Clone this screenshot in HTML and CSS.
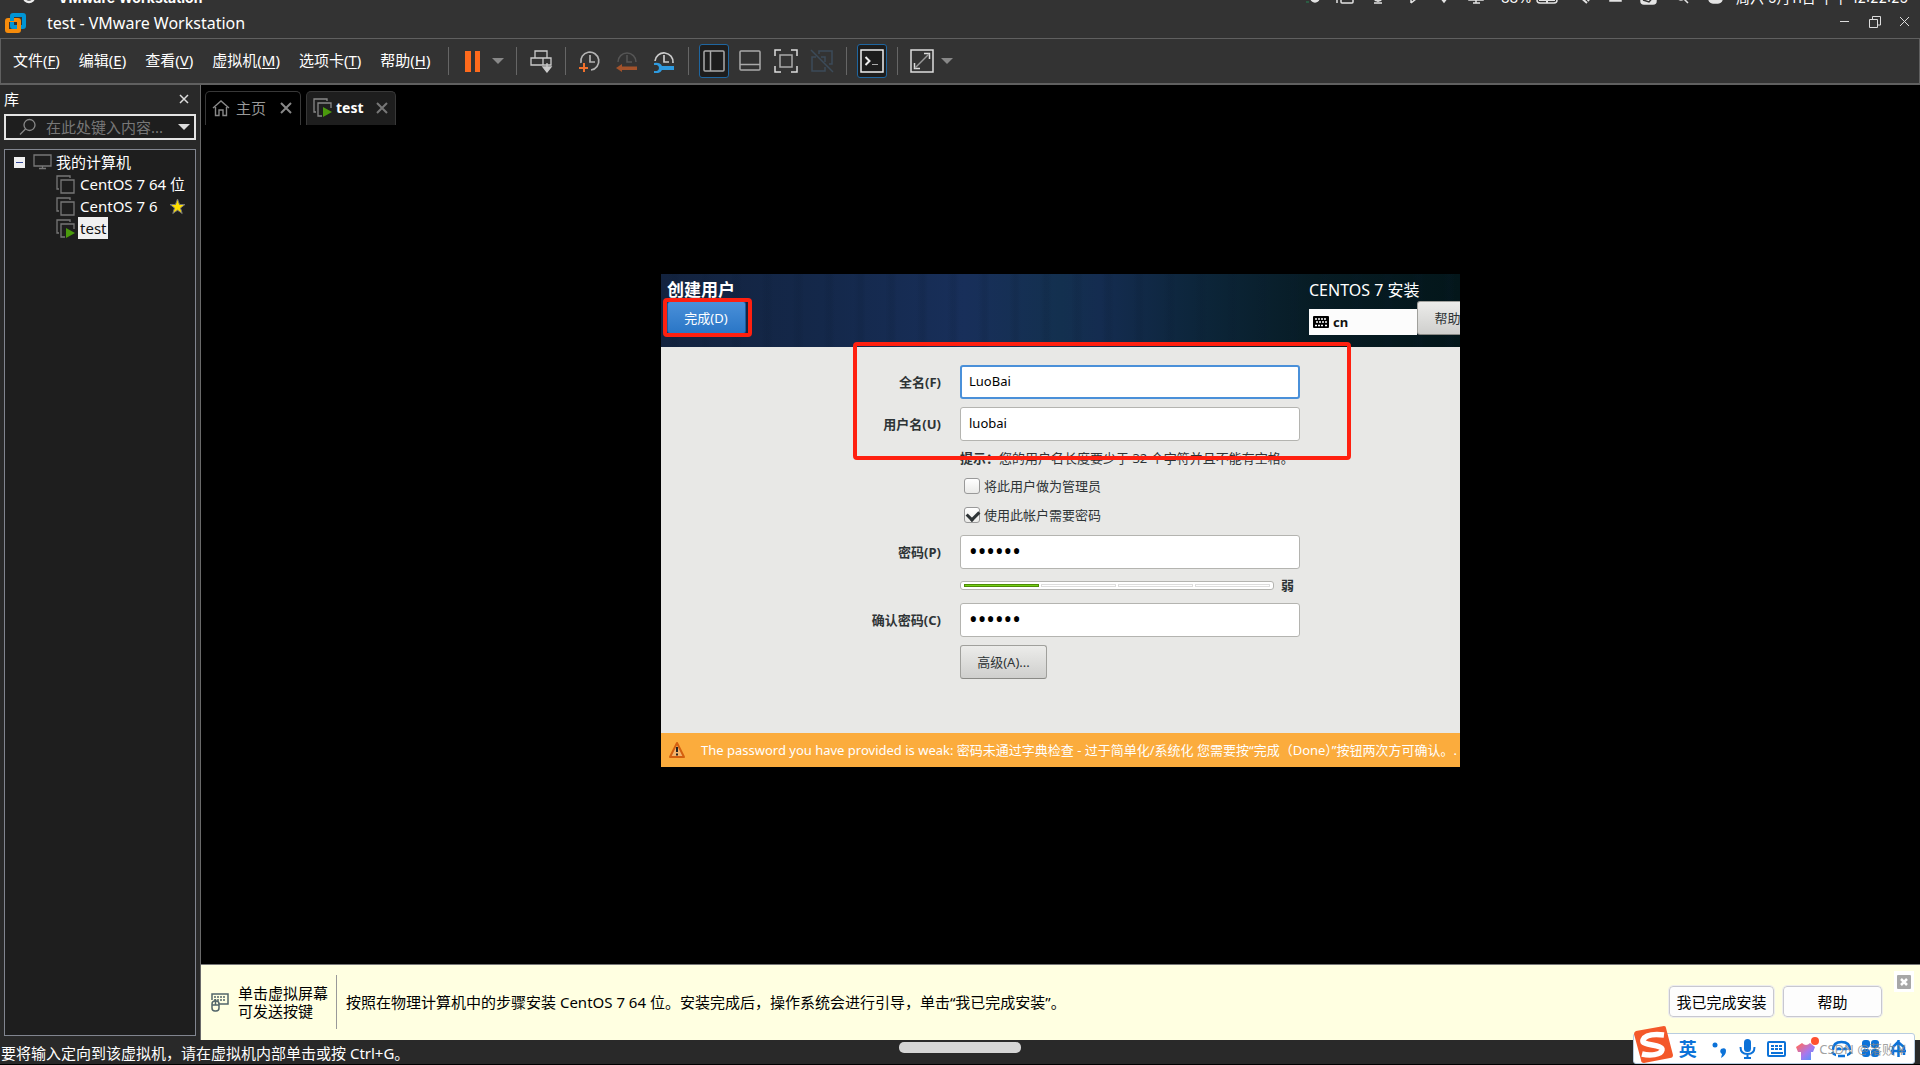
FILE: index.html
```html
<!DOCTYPE html>
<html lang="zh-CN">
<head>
<meta charset="utf-8">
<title>test - VMware Workstation</title>
<link rel="stylesheet" href="styles.css">
</head>
<body>
<div class="host-bar">
  <span class="host-icon"><svg width="14" height="14" viewBox="0 0 14 14"><circle cx="7" cy="6" r="5" fill="none" stroke="#eee" stroke-width="2.5"/></svg></span>
  <b class="host-app">VMware Workstation</b>
  <span class="host-tray">
    <svg width="191" height="14" viewBox="0 0 191 14"><g fill="#e4e4e4" stroke="#e4e4e4" stroke-width="1.5"><circle cx="9" cy="7" r="4"/><path d="M0 11h3" stroke="#2a6b4a"/><path d="M31 4v8M35 4h12v7q0 1-1 1H36q-1 0-1-1z" fill="none"/><path d="M72 8v3M68 12h8M68 6q0 4 4 4t4-4" fill="none"/><path d="M105 12V5l5 3-5 4" fill="none"/><path d="M134 6l4 5 4-5z"/><path d="M163 4h14v5h-14zM167 12h7M170 9v3"/></g></svg>
    <span>88%</span>
    <svg width="190" height="14" viewBox="0 0 190 14"><g fill="none" stroke="#e4e4e4" stroke-width="1.5"><rect x="1" y="3" width="20" height="9" rx="3"/><path d="M3 9h7M12 9h7M11 4v8" stroke-width="2"/><path d="M43 5l8 7M48 4l5 6" stroke-width="2"/><path d="M74 4h11v6H74z" fill="#e4e4e4"/><rect x="105" y="2" width="15" height="11" rx="3" fill="#e4e4e4"/><path d="M107 9l6 2 5-6" stroke="#333"/><circle cx="145" cy="5" r="4"/><path d="M148 8l4 4"/><rect x="173" y="3" width="13" height="9" rx="4" fill="#e4e4e4"/><path d="M176 8h3" stroke="#333"/></g></svg>
    <span class="clock">周六 5月11日 下午 12:22:25</span>
  </span>
</div>
<header class="titlebar">
  <svg width="22" height="22" viewBox="0 0 22 22" fill="none" stroke-width="4"><rect x="7" y="3" width="12" height="12" rx="1" stroke="#0095d5"/><rect x="2" y="8" width="12" height="11" rx="1" stroke="#f68b0b"/><path d="M7 9V5" stroke="#0095d5"/></svg>
  <h1>test - VMware Workstation</h1>
  <div class="window-buttons">
    <button aria-label="最小化"><svg width="12" height="12" viewBox="0 0 12 12"><path d="M1 5.5h9"/></svg></button>
    <button aria-label="还原"><svg width="12" height="12" viewBox="0 0 12 12"><path d="M.5 3.500h8v8h-8zM3.500 3V.5h8v8.500H9"/></svg></button>
    <button aria-label="关闭"><svg width="12" height="12" viewBox="0 0 12 12"><path d="M1 1l9 9M10 1l-9 9"/></svg></button>
  </div>
</header>
<div class="toolbar">
  <nav class="menus">
    <button>文件(<u>F</u>)</button><button>编辑(<u>E</u>)</button><button>查看(<u>V</u>)</button><button>虚拟机(<u>M</u>)</button><button>选项卡(<u>T</u>)</button><button>帮助(<u>H</u>)</button>
  </nav>
  <div class="group">
    <button class="tool" aria-label="挂起"><svg width="24" height="24" viewBox="0 0 24 24" fill="#ff6a1c"><path d="M4 2h6v21H4zM14 2h5v21h-5z"/></svg></button>
    <button class="caret" aria-label="电源选项"></button>
  </div>
  <div class="group">
    <button class="tool" aria-label="发送按键"><svg width="24" height="24" viewBox="0 0 24 24" fill="none" stroke="#ccc" stroke-width="1.300"><path d="M6 9V2h12v7M2 9h20v7H2zM14 9v7"/><path d="M18 14v4M18 23l-4-5h8z" fill="#ccc"/></svg></button>
  </div>
  <div class="group wide">
    <button class="tool" aria-label="拍摄快照"><svg width="24" height="24" viewBox="0 0 24 24" fill="none" stroke="#b4b4b4" stroke-width="1.700"><path d="M3 14A9 9 0 1 1 13 21M12 6v7h5"/><path d="M6 14v9M1 19h9" stroke="#f0702c" stroke-width="2"/></svg></button>
    <button class="tool" aria-label="恢复快照"><svg width="24" height="24" viewBox="0 0 24 24" fill="none" stroke="#555" stroke-width="1.500"><path d="M3 13A9 9 0 1 1 21 13M12 6v7h5"/><path d="M1 19l6-4v2.500h15v3.500H7V23z" fill="#a2522b" stroke="none"/></svg></button>
    <button class="tool" aria-label="管理快照"><svg width="24" height="24" viewBox="0 0 24 24" fill="none" stroke="#ccc" stroke-width="1.700"><path d="M3 12A9 9 0 1 1 21 14M12 6v7h5"/><path d="M2 14q6-1 8 3h12v4H10q-2 4-8 3v-2h3q2-1 2-3t-2-3H2z" fill="#2e9be0" stroke="none"/></svg></button>
  </div>
  <div class="group views">
    <button class="tool on" aria-label="显示库"><svg width="24" height="24" viewBox="0 0 24 24" fill="none" stroke="#aaa" stroke-width="1.500"><rect x="2" y="2" width="20" height="20" rx="1"/><path d="M8.500 2v20"/></svg></button>
    <button class="tool" aria-label="缩略图栏"><svg width="24" height="24" viewBox="0 0 24 24" fill="none" stroke="#aaa" stroke-width="1.500"><rect x="2" y="2" width="20" height="19" rx="1"/><path d="M2 15.500h20"/></svg></button>
    <button class="tool" aria-label="全屏"><svg width="24" height="24" viewBox="0 0 24 24" fill="none" stroke="#ddd" stroke-width="1.500"><path d="M1 7V1h6M17 1h6v6M23 17v6h-6M7 23H1v-6"/><rect x="6" y="6" width="12" height="12" stroke="#aaa"/></svg></button>
    <button class="tool" aria-label="Unity"><svg width="24" height="24" viewBox="0 0 24 24" fill="none" stroke="#3c4b59" stroke-width="1.500"><path d="M1 1l22 22M9 5V2h13v13h-3M6 8H2v14h13v-4M11 8h4v5"/></svg></button>
  </div>
  <div class="group">
    <button class="tool on" aria-label="控制台视图"><svg width="24" height="24" viewBox="0 0 24 24" fill="none" stroke="#eee"><path d="M1 1h22v22H1z" stroke-width="1.500"/><path d="M5.500 8l4 4-4 4" stroke-width="2"/><path d="M12 15.500h6" stroke="#aaa"/></svg></button>
  </div>
  <div class="group">
    <button class="tool" aria-label="拉伸客户机"><svg width="24" height="24" viewBox="0 0 24 24" fill="none" stroke="#ddd" stroke-width="1.500"><path d="M1 1h22v22H1zM14 4.500h5.500V10M4.500 14v5.500H10"/><path d="M19 5L5 19" stroke="#999"/></svg></button>
    <button class="caret" aria-label="拉伸选项"></button>
  </div>
</div>
<div class="workspace">
  <aside class="library">
    <div class="library-head"><h2>库</h2><button aria-label="关闭库"><svg width="10" height="10" viewBox="0 0 10 10"><path d="M1 1l8 8M9 1L1 9" stroke="#ddd" stroke-width="1.500"/></svg></button></div>
    <label class="search">
      <svg width="18" height="18" viewBox="0 0 18 18" fill="none" stroke="#888" stroke-width="1.300"><circle cx="10.500" cy="7" r="5.500"/><path d="M6.500 11L1 16.500"/></svg>
      <input type="text" placeholder="在此处键入内容..." aria-label="搜索">
      <i class="arrow"></i>
    </label>
    <ul class="tree">
      <li><i class="collapse"></i><svg width="20" height="16" viewBox="0 0 20 16" fill="none" stroke="#777" stroke-width="1.300"><path d="M1 1h17v11H1zM9.500 12v2M6 14.500h7"/></svg><span>我的计算机</span></li>
      <li class="vm"><svg width="19" height="19" viewBox="0 0 19 19" fill="none" stroke="#777" stroke-width="1.300"><path d="M5 5h13v13H5zM3 14H1V1h13v2"/></svg><span>CentOS 7 64 位</span></li>
      <li class="vm"><svg width="19" height="19" viewBox="0 0 19 19" fill="none" stroke="#777" stroke-width="1.300"><path d="M5 5h13v13H5zM3 14H1V1h13v2"/></svg><span>CentOS 7 6</span><svg class="star" width="17" height="17" viewBox="0 0 17 17"><path d="M8.500 1l2 5.500h5.500l-4.500 3.500 1.700 5.500-4.700-3.300-4.700 3.300L5.500 10 1 6.500h5.500z" fill="#ffdf00" stroke="#777"/></svg></li>
      <li class="vm"><svg width="19" height="19" viewBox="0 0 19 19" fill="none" stroke="#777" stroke-width="1.300"><path d="M9 18H5V5h13v5M3 14H1V1h13v2"/><path d="M10 9l9 5-9 5z" fill="#4a9a0c" stroke="none"/></svg><span class="selected">test</span></li>
    </ul>
  </aside>
  <main>
    <div class="tabs">
      <div class="tab"><svg width="18" height="18" viewBox="0 0 18 18" fill="none" stroke="#888" stroke-width="1.400"><path d="M1 9l8-7 8 7M3.500 8v8.500H7V11h4v5.500h3.500V8"/></svg><span>主页</span><button aria-label="关闭主页"><svg width="12" height="12" viewBox="0 0 12 12"><path d="M1 1l10 10M11 1L1 11" stroke="#888" stroke-width="2"/></svg></button></div>
      <div class="tab active"><svg width="19" height="19" viewBox="0 0 19 19" fill="none" stroke="#888" stroke-width="1.300"><path d="M9 18H5V5h13v5M3 14H1V1h13v2"/><path d="M10 9l9 5-9 5z" fill="#4a9a0c" stroke="none"/></svg><b>test</b><button aria-label="关闭 test"><svg width="12" height="12" viewBox="0 0 12 12"><path d="M1 1l10 10M11 1L1 11" stroke="#777" stroke-width="2"/></svg></button></div>
    </div>
    <div class="console">
      <section class="guest">
        <header class="guest-head">
          <div class="guest-left"><h3>创建用户</h3><button class="done">完成(D)</button></div>
          <div class="guest-right"><p>CENTOS 7 安装</p>
            <div class="guest-tools"><span class="layout"><svg width="16" height="12" viewBox="0 0 16 12"><rect width="16" height="12" rx="1"/><path d="M2 3h12M3 6h11M2 9.500h2M5 9.500h6M12 9.500h2" stroke="#fff" stroke-width="1.500" stroke-dasharray="2 1"/></svg>cn</span><button class="plain help">帮助</button></div>
          </div>
        </header>
        <form class="user-form">
          <label for="full">全名(F)</label><input class="focused" id="full" type="text" value="LuoBai" autofocus>
          <label for="name">用户名(U)</label><input id="name" type="text" value="luobai">
          <p class="hint"><b>提示：</b>您的用户名长度要少于 32 个字符并且不能有空格。</p>
          <label class="check"><input type="checkbox">将此用户做为管理员</label>
          <label class="check second"><input type="checkbox" checked>使用此帐户需要密码</label>
          <label for="pw">密码(P)</label><input id="pw" type="password" value="123456">
          <div class="strength"><div class="meter" role="meter" aria-valuenow="1" aria-valuemin="0" aria-valuemax="4" aria-label="密码强度"><i class="full"></i><i></i><i></i><i></i></div><b>弱</b></div>
          <label for="pw2">确认密码(C)</label><input id="pw2" type="password" value="123456">
          <button type="button" class="plain advanced">高级(A)...</button>
        </form>
        <footer class="warning"><svg width="18" height="18" viewBox="0 0 18 18"><path d="M9 2l7 14H2z" fill="#f3b36b" stroke="#d4600f" stroke-width="2" stroke-linejoin="round"/><path d="M9 6v5M9 12.500v2" stroke="#222" stroke-width="2"/></svg><span>The password you have provided is weak: 密码未通过字典检查 - 过于简单化/系统化 您需要按“完成（Done）”按钮两次方可确认。.</span></footer>
        <div class="mark mark-done"></div>
        <div class="mark mark-names"></div>
      </section>
    </div>
    <div class="notice">
      <svg width="20" height="20" viewBox="0 0 20 20" fill="none" stroke="#526569" stroke-width="1.500"><path d="M2 8V2h16v10H9"/><path d="M4 5h12M4 8h12" stroke-dasharray="2 1"/><rect x="2" y="9" width="7" height="10" rx="3" fill="#ffffe1"/><path d="M5.500 7v6M2 13h7"/></svg>
      <p class="grab">单击虚拟屏幕<br>可发送按键</p>
      <p class="steps">按照在物理计算机中的步骤安装 CentOS 7 64 位。安装完成后，操作系统会进行引导，单击“我已完成安装”。</p>
      <button class="finish">我已完成安装</button><button class="assist">帮助</button>
      <button class="dismiss" aria-label="关闭提示"><svg width="14" height="14" viewBox="0 0 14 14"><rect width="14" height="14" rx="1" fill="#a7a7a7"/><path d="M4 4l6 6M10 4l-6 6" stroke="#fff" stroke-width="2.500"/></svg></button>
    </div>
  </main>
</div>
<footer class="status">要将输入定向到该虚拟机，请在虚拟机内部单击或按 Ctrl+G。</footer>
<div class="home-indicator"></div>
<div class="ime">
  <svg class="sogou" width="40" height="37" viewBox="0 0 40 37"><path d="M2 5L30 0q2 0 2 2l7 27q0 3-3 3L10 37q-3 0-3-3L0 8q0-2 2-3z" fill="#f4582a"/><path d="M30 9Q12 7 9 14c-2 6 20 4 19 10-1 5-12 6-20 4" fill="none" stroke="#fff" stroke-width="5.500"/></svg>
  <b>英</b>
  <svg width="17" height="18" viewBox="0 0 17 18" fill="#0c72d8"><circle cx="4" cy="5" r="2.500"/><path d="M10 9q5-2 5 2t-5 7l1-4q-3-2-1-5z"/></svg>
  <svg width="17" height="20" viewBox="0 0 17 20"><rect x="5" y="0" width="7" height="13" rx="3.500" fill="#0c72d8"/><path d="M1.500 8q0 7 7 7t7-7M8.500 15v4M5 19h7" fill="none" stroke="#0c72d8" stroke-width="2"/></svg>
  <svg width="19" height="16" viewBox="0 0 19 16" fill="none" stroke="#0c72d8" stroke-width="2"><rect x="1" y="1" width="17" height="14" rx="1"/><path d="M4 5h12M4 8h12" stroke-dasharray="3 1"/><path d="M4 12h12"/></svg>
  <svg width="24" height="24" viewBox="0 0 24 24"><defs><linearGradient id="shirt" x1="0" y1="0" x2="1" y2="1"><stop offset=".1" stop-color="#ff6a64"/><stop offset=".55" stop-color="#a878ee"/><stop offset="1" stop-color="#3e9cff"/></linearGradient></defs><path d="M6 6q4 4 8 0l5 4-2 5h-2v8H5v-8H2L0 10z" fill="url(#shirt)"/><circle cx="19" cy="4" r="4" fill="#ff512f"/></svg>
  <svg width="21" height="18" viewBox="0 0 21 18" fill="none" stroke="#0c72d8" stroke-width="2.500"><path d="M2 10Q2 2 10.500 2T19 10M1 12q2 3 4 3M20 12q-2 3-4 3M7 16h7M6 10q2-3 4 0M12 10q2-3 4 0"/></svg>
  <svg width="17" height="17" viewBox="0 0 17 17" fill="#0c72d8"><rect width="8" height="8" rx="3"/><rect x="9" width="8" height="8" rx="3"/><rect y="9" width="8" height="8" rx="3"/><rect x="9" y="9" width="8" height="8" rx="3"/></svg>
  <svg width="17" height="19" viewBox="0 0 17 19" fill="none" stroke="#0c72d8" stroke-width="2.500"><path d="M8.500 1v17M3 16V8l5-5 6 5v8M1 12h15"/></svg>
  <span class="watermark">CSDN @落败￥</span>
</div>
</body>
</html>
```
FILE: styles.css
```css
* { box-sizing: border-box; }
body {
  margin: 0;
  height: 100vh;
  display: flex;
  flex-direction: column;
  overflow: hidden;
  background: #333;
  color: #fff;
  font: 15px/20px "Noto Sans", "Noto Sans CJK SC", sans-serif;
}
h1, h2, h3, p, ul { margin: 0; padding: 0; font-size: inherit; font-weight: normal; }
button, input { font: inherit; color: inherit; }
button { display: flex; align-items: center; justify-content: center; padding: 0; border: 0; background: none; white-space: nowrap; }
svg { flex: none; display: block; }

.host-bar { flex: none; height: 5px; display: flex; align-items: flex-end; overflow: hidden; padding: 0 18px 0 22px; font: 14px/14px Inter, "Noto Sans CJK SC", sans-serif; white-space: nowrap; }
.host-app { margin-left: 22px; }
.host-tray { display: flex; align-items: flex-end; margin-left: auto; gap: 4px; }
.clock { width: 166px; margin-left: 6px; }

.titlebar { flex: none; height: 33px; display: flex; align-items: center; padding: 3px 9px 0 5px; }
.titlebar h1 { margin-left: 20px; font-size: 16px; }
.window-buttons { display: flex; gap: 18px; margin-left: auto; padding-bottom: 2px; }
.window-buttons svg { fill: none; stroke: #ddd; }

.toolbar { flex: none; height: 47px; display: flex; align-items: center; padding: 0 0 1px 12px; border: 1px solid #606060; border-bottom-width: 2px; }
.menus { display: flex; gap: 19px; padding: 0 18px 1px 0; }
.menus u { text-underline-offset: 2px; }
.group { display: flex; align-items: center; height: 28px; padding: 0 12px; border-left: 1px solid #666; }
.group.wide { gap: 13px; }
.group.views { gap: 6px; padding: 0 9px 0 10px; }
.tool { width: 24px; height: 34px; }
.tool svg { width: 24px; height: 24px; }
.views .tool, .tool.on { width: 30px; }
.tool.on { border: 1px solid #1f66a0; border-radius: 3px; background: #1d1d1d; }
.group:has(> .tool.on:only-child) { padding: 0 10px; }
.caret { margin-left: 7px; border: 6px solid transparent; border-top-color: #888; border-bottom: 0; }

.workspace { flex: 1; min-height: 0; display: flex; }
.library { flex: none; width: 200px; display: flex; flex-direction: column; padding: 4px 4px; background: #292929; }
.library-head { display: flex; justify-content: space-between; align-items: center; height: 20px; padding-right: 7px; margin-bottom: 5px; }
.search { display: flex; align-items: center; height: 26px; padding: 0 4px 0 13px; border: 2px solid #e4e4e4; background: #1e1e1e; }
.search input { min-width: 0; flex: 1; margin-left: 9px; padding: 0; border: 0; background: none; outline: 0; }
.search input::placeholder { color: #777; }
.arrow { border: 6px solid transparent; border-top-color: #ddd; border-bottom: 0; }
.tree { flex: 1; margin-top: 9px; padding-top: 1px; border: 1px solid #81858f; background: #1e1e1e; list-style: none; overflow: hidden; }
.tree li { display: flex; align-items: center; height: 22px; padding-left: 9px; white-space: nowrap; }
.tree li svg { margin-left: 8px; }
.tree li span { margin-left: 3px; padding: 0 2px; }
.tree li:first-child span { margin-left: 1px; }
.tree .vm { padding-left: 43px; }
.tree .selected { height: 22px; line-height: 22px; background: #f0f0f0; color: #111; }
.tree li .star { margin-left: 9px; }
.collapse { display: flex; align-items: center; width: 11px; height: 11px; background: #f0f0f0; }
.collapse::before { content: ""; flex: 1; height: 1px; margin: 0 2px; background: #34489a; }

main { flex: 1; min-width: 0; display: flex; flex-direction: column; border-left: 1px solid #6a6a6a; background: #000; }
.tabs { display: flex; gap: 5px; padding: 6px 4px 0; }
.tab { display: flex; align-items: center; height: 34px; padding: 0 8px 2px 6px; border: 1px solid #383838; border-bottom: 0; border-radius: 5px 5px 0 0; color: #999; }
.tab span { margin: 0 14px 0 6px; }
.tab b { margin: 0 12px 0 4px; font-size: 14px; color: #fff; }
.tab.active { padding-right: 7px; background: #1e1e1e; }
.console { flex: 1; min-height: 0; display: flex; align-items: center; justify-content: center; padding-bottom: 48px; }

.guest { position: relative; width: 799px; background: #e8e8e6; color: #2e3436; font-size: 13px; }
.guest-head { display: flex; justify-content: space-between; height: 73px; padding: 6px 0 0 6px; overflow: hidden; color: #fff;
  background: repeating-linear-gradient(90deg, #0000 0 7px, #0a1a3022 12px 15px, #0000 19px 31px), linear-gradient(90deg, #13233f 0, #14284a 20%, #182f5a 38%, #13304f 50%, #142c50 55%, #0c2539 68%, #071c24 82%, #03161a 100%); }
.guest-left h3 { font-size: 17px; line-height: 20px; font-weight: bold; margin-bottom: 1px; }
.done { width: 79px; height: 33px; padding-right: 1px; border: 1px solid #1c5c9f; border-radius: 3px; background: linear-gradient(#4a90d9, #2a76c6); }
.guest-right { width: 151px; }
.guest-right p { font-size: 16px; line-height: 20px; }
.guest-tools { display: flex; align-items: flex-start; width: 200px; margin-top: 1px; }
.layout { display: flex; align-items: center; gap: 4px; width: 108px; height: 26px; margin-top: 8px; padding-left: 4px; background: #fcfcfc; color: #111; font-weight: bold; }
.plain { border: 1px solid #a0a09c; border-bottom-color: #8a8a86; border-radius: 3px; background: linear-gradient(#ececea, #cfcfcd); color: #2e3436; }
.help { width: 61px; height: 34px; }

.user-form { display: grid; grid-template-columns: 280px 340px; gap: 8px 19px; padding: 18px 0 54px; }
.user-form > label:not(.check) { align-self: center; padding-bottom: 1px; text-align: right; font-weight: bold; }
.user-form > input { height: 34px; padding: 0 8px 2px; border: 1px solid #b4b4b0; border-radius: 3px; background: #fff; color: #000; outline: 0; }
.user-form > input.focused { padding: 0 7px 2px; border: 2px solid #4a90d9; }
.user-form > input[type="password"] { font-size: 23px; }
.hint, .check, .strength, .advanced { grid-column: 2; }
.hint { line-height: 18px; padding-bottom: 2px; white-space: nowrap; }
.check { display: flex; align-items: center; height: 20px; gap: 4px; padding: 0 0 2px 4px; }
.check.second { height: 22px; }
.check input { appearance: none; display: flex; width: 16px; height: 16px; margin: 0; border: 1px solid #999; border-radius: 3px; background: linear-gradient(#fff, #eaeae8); }
.check input:checked::before { content: ""; width: 11px; height: 6px; margin: 2px 0 0 2px; border: solid #2e3436; border-width: 0 0 3px 3px; rotate: -45deg; }
.strength { display: flex; align-items: center; height: 18px; gap: 7px; padding-bottom: 2px; }
.meter { display: flex; gap: 2px; width: 314px; height: 9px; padding: 2px 3px; border: 1px solid #b4b4b0; border-radius: 3px; background: #fff; }
.meter i { flex: 1; border: 1px solid #ddd; }
.meter .full { border-color: #4e8a06; background: #73d216; }
.advanced { width: 87px; height: 34px; }
.warning { display: flex; align-items: center; height: 34px; padding-left: 7px; overflow: hidden; gap: 15px; background: #fbac3d; color: #fff; white-space: nowrap; }

/* Highlights over the guest screen */
.mark { position: absolute; border: 4px solid #ff2010; border-radius: 4px; pointer-events: none; }
.mark-done { left: 2px; top: 24px; width: 89px; height: 39px; }
.mark-names { left: 192px; top: 68px; width: 498px; height: 118px; }

.notice { flex: none; display: flex; align-items: center; height: 76px; padding: 0 6px 2px 9px; border-top: 1px solid #777; background: #ffffe1; color: #000; }
.grab { margin-left: 8px; padding: 9px 8px 9px 0; line-height: 18px; border-right: 1px solid #999; }
.steps { flex: 1; margin-left: 9px; }
.finish, .assist { height: 31px; border: 1px solid #c8c8d0; border-radius: 4px; outline: 1px solid #eee; background: #fdfdfd; }
.finish { width: 105px; }
.assist { width: 99px; margin: 0 12px 0 9px; }
.dismiss { align-self: flex-start; width: 20px; height: 21px; margin-top: 6px; background: #fff; }

.status { flex: none; height: 25px; padding: 3px 1px; border-bottom: 1px solid #000; background: #292929; }
/* Host system overlays */
.home-indicator { position: absolute; left: 50%; bottom: 12px; width: 122px; height: 11px; margin-left: -61px; border-radius: 5px; background: #d5d5d5; }
.ime { position: absolute; right: 5px; bottom: 1px; display: flex; align-items: center; width: 282px; height: 31px; padding: 0 7px 0 0; border: 1px solid #b8cce0; border-radius: 3px; background: #fff; justify-content: space-between; }
.ime b { margin: 0 4px 0 -6px; color: #0c72d8; font-size: 18px; }
.sogou { align-self: flex-end; }
.watermark { position: absolute; right: 6px; top: 5px; font-size: 13px; color: #888c; white-space: nowrap; }
```
